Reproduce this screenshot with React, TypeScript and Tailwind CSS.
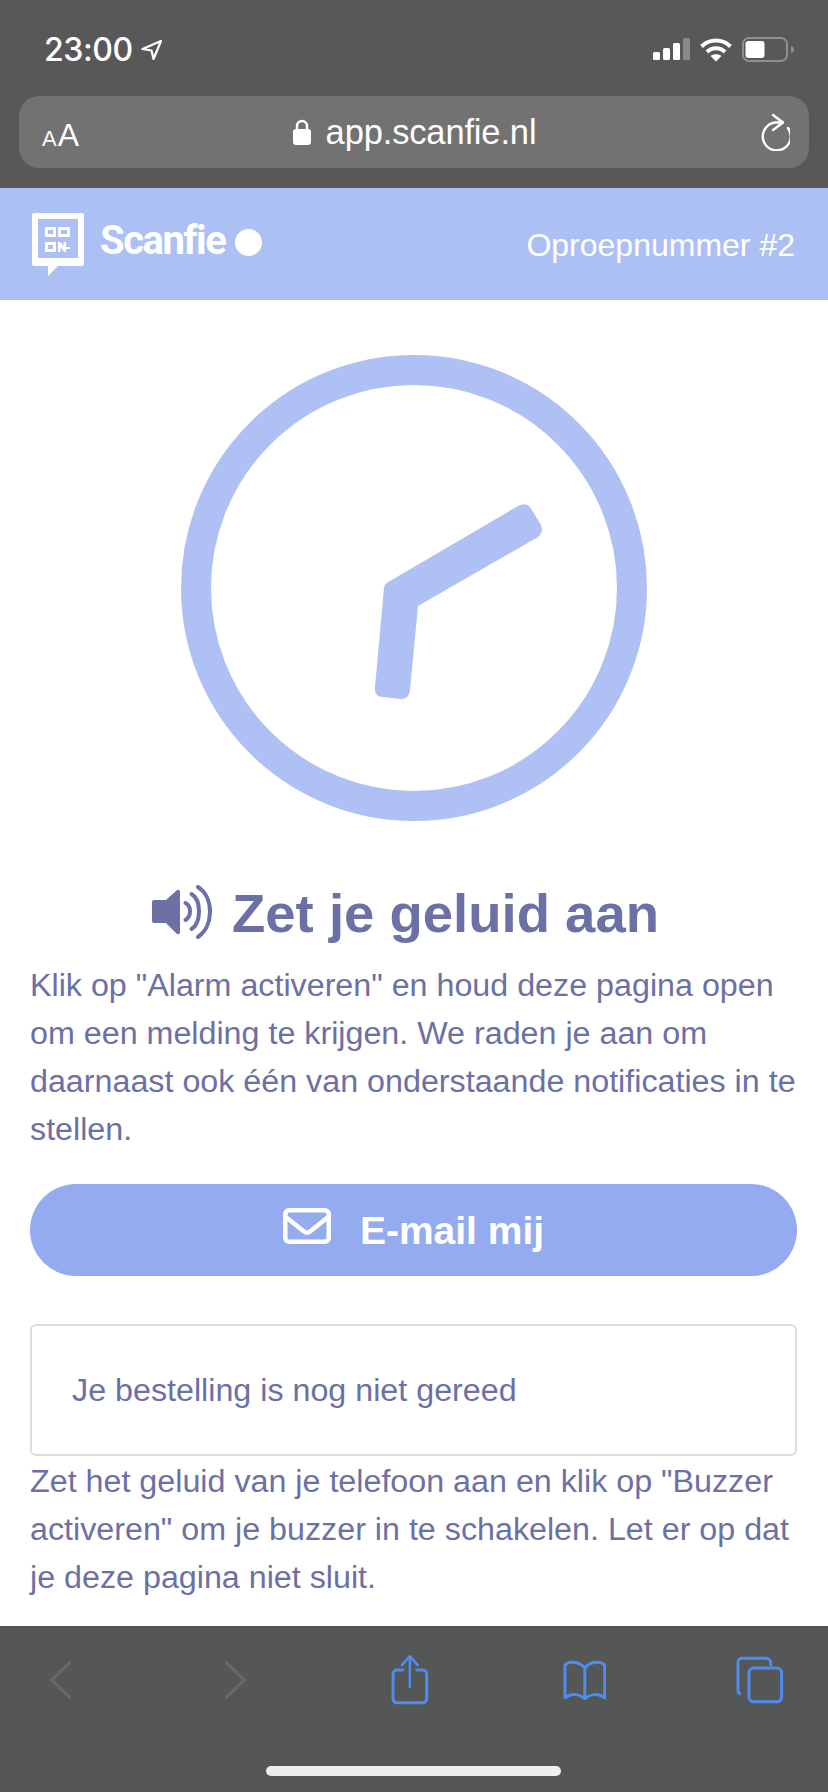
export default function App() {
  return (
    <div className="w-[828px] h-[1792px] flex flex-col overflow-hidden bg-white font-['Liberation_Sans',Arial,sans-serif]">
      {/* Status + address bar */}
      <div className="h-[188px] shrink-0 bg-[#585858] text-white flex flex-col">
        <div className="h-[96px] flex items-start justify-between pl-[44px] pr-[34px] pt-[37px]">
          <div className="flex items-center gap-[6px]">
            <span className="text-[32px] leading-[26px] tracking-[-0.4px] font-['Inter',sans-serif] font-medium w-[91px]">23:00</span>
            <svg width="22" height="22" viewBox="0 0 22 22" fill="none" stroke="white" strokeWidth="2.200" strokeLinejoin="round"><path d="M20 2 1.500 10l9 1.500 2 8.500z" /></svg>
          </div>
          <div className="flex items-start gap-[10px]">
            <svg width="37" height="22" viewBox="0 0 37 22" className="mt-[1px]"><rect x="0" y="14" width="7" height="8" rx="1.500" fill="#fff" /><rect x="10" y="10" width="7" height="12" rx="1.500" fill="#fff" /><rect x="20" y="5" width="7" height="17" rx="1.500" fill="#fff" /><rect x="30" y="0" width="7" height="22" rx="1.500" fill="#8a8a8a" /></svg>
            <svg width="32" height="24" viewBox="0 0 32 24" fill="none" stroke="#fff" strokeWidth="4" className="mt-[1px]"><path d="M1.500 8.500c8-8 21-8 29 0" /><path d="M7 14c5-5 13-5 18 0" /><path d="M16 23.500l-5.500-5.500c3-2.500 8-2.500 11 0z" fill="#fff" stroke="none" /></svg>
            <svg width="52" height="25" viewBox="0 0 52 25"><rect x="1" y="1" width="44" height="23" rx="6" fill="none" stroke="#8f8f8f" strokeWidth="2" /><rect x="3.500" y="4" width="19" height="17" rx="3" fill="#fff" /><path d="M49 9c2 .5 3 2 3 3.500s-1 3-3 3.500z" fill="#8f8f8f" /></svg>
          </div>
        </div>
        <div className="mx-[19px] h-[72px] rounded-[20px] bg-[#727272] flex items-center pl-[23px] pr-[19px] justify-between">
          <div className="flex items-baseline gap-[1px] w-[37px] mt-[6px]">
            <span className="text-[22px] leading-none">A</span>
            <span className="text-[32px] leading-none">A</span>
          </div>
          <div className="flex items-center gap-[15px] ml-[-8px]">
            <svg width="18" height="26" viewBox="0 0 18 26" fill="none"><path d="M4 11V7a5 5 0 0 1 10 0v4" stroke="#fff" strokeWidth="2.400" /><rect x="0" y="10" width="18" height="16" rx="3" fill="#fff" /></svg>
            <span className="text-[34.500px] leading-none tracking-[-0.150px]">app.scanfie.nl</span>
          </div>
          <svg width="32" height="38" viewBox="0 0 32 38" fill="none" stroke="#fff" strokeWidth="2.400" strokeLinecap="round" strokeLinejoin="round"><path d="M25 9.500H17A14 14 0 1 0 30 15" /><path d="M15 2l10 7.500-10 7.500" /></svg>
        </div>
      </div>

      {/* App header */}
      <div className="h-[112px] shrink-0 bg-[#adc0f4] flex items-center justify-between pl-[32px] pr-[33px] text-white">
        <div className="flex items-center">
          <svg width="52" height="64" viewBox="0 0 52 64" className="mt-[2px]">
            <path d="M2 0h48a2 2 0 0 1 2 2v49a2 2 0 0 1-2 2H26L16 63V53H2a2 2 0 0 1-2-2V2a2 2 0 0 1 2-2z" fill="#fff" />
            <rect x="6" y="6" width="40" height="39" fill="#adc0f4" />
            <g fill="none" stroke="#fff" strokeWidth="3">
              <rect x="14.500" y="15.500" width="8" height="7" />
              <rect x="27.500" y="15.500" width="9" height="7" />
              <rect x="14.500" y="30.500" width="8" height="7" />
            </g>
            <path d="M26 39v-10h2.500l3 4v-4h2.500v5h4v2h-4v3h-2l-3.500-5v5z" fill="#fff" />
          </svg>
          <span className="ml-[16px] text-[40px] leading-none font-bold tracking-[-1.500px] w-[135px] mb-[6px] font-['Roboto',sans-serif]">Scanfie</span>
          <span className="w-[27px] h-[27px] rounded-full bg-white mb-[4px]" />
        </div>
        <span className="text-[32px] leading-none mt-[2px]">Oproepnummer #2</span>
      </div>

      {/* Content */}
      <div className="flex-1 min-h-0 overflow-hidden px-[30px] pt-[55px] text-[#6b70a5]">
        <svg width="466" height="466" viewBox="0 0 466 466" className="block ml-[151px]">
          <circle cx="233" cy="233" r="218" fill="none" stroke="#aec0f4" strokeWidth="30" />
          <path d="M203 233 Q203 229 209 226 L337 151 Q345 147 349 152 L360 170 Q363 177 357 182 L237 251 L229 335 Q228 344 220 344 L201 342 Q193 341 194 332 Z" fill="#aec0f4" />
        </svg>

        <div className="mt-[55px] flex items-center gap-[16px] h-[76px] ml-[122px]">
          <svg width="64" height="54" viewBox="0 0 64 54" fill="none" stroke="#6b70a5" strokeLinecap="round" strokeWidth="4" className="-mt-[5px]">
            <path d="M0 17a2 2 0 0 1 2-2h12L24 6c2-2 4-1.500 4 1v40c0 2.500-2 3-4 1L14 38H2a2 2 0 0 1-2-2z" fill="#6b70a5" stroke="none" />
            <path d="M33.500 18c6 3 6 13 0 17" />
            <path d="M39.500 9c10 6 10 29 0 35" />
            <path d="M46 2c16 10 16 39 0 50" />
          </svg>
          <h1 className="text-[54.500px] leading-none font-bold text-[#6b70a5]">Zet je geluid aan</h1>
        </div>

        <p className="mt-[9px] text-[32.250px] leading-[48px]">
          Klik op "Alarm activeren" en houd deze pagina open om een melding te krijgen. We raden je aan om daarnaast ook één van onderstaande notificaties in te stellen.
        </p>

        <button className="mt-[31px] w-[767px] h-[92px] rounded-[46px] bg-[#94abef] flex items-center justify-center gap-[29px] text-white">
          <svg width="48" height="36" viewBox="0 0 48 36" fill="none" stroke="#fff" strokeWidth="4.500" strokeLinejoin="round" strokeLinecap="round" className="-mt-[9px]">
            <rect x="2.250" y="2.250" width="43.500" height="31.500" rx="4" />
            <path d="M4 10l17 13.500c2 1.500 4 1.500 6 0L44 10" />
          </svg>
          <span className="text-[39px] leading-none font-bold">E-mail mij</span>
        </button>

        <div className="mt-[48px] w-[767px] h-[132px] rounded-[6px] border-2 border-[#dddddd] flex items-center pl-[40px]">
          <span className="text-[32.250px] leading-none">Je bestelling is nog niet gereed</span>
        </div>

        <p className="mt-[1px] text-[32.250px] leading-[48px]">
          Zet het geluid van je telefoon aan en klik op "Buzzer activeren" om je buzzer in te schakelen. Let er op dat je deze pagina niet sluit.
        </p>
      </div>

      {/* Bottom toolbar */}
      <div className="h-[166px] shrink-0 bg-[#555656] relative">
        <div className="flex items-start justify-between pl-[50px] pr-[44px] pt-[29px]">
          <div className="flex gap-[154px] pt-[6px]">
            <svg width="21" height="38" viewBox="0 0 21 38" fill="none" stroke="#6b6b6b" strokeWidth="3" strokeLinecap="round" strokeLinejoin="round"><path d="M20 1.500 1.500 19 20 36.500" /></svg>
            <svg width="21" height="38" viewBox="0 0 21 38" fill="none" stroke="#6b6b6b" strokeWidth="3" strokeLinecap="round" strokeLinejoin="round"><path d="M1 1.500 19.500 19 1 36.500" /></svg>
          </div>
          <svg width="38" height="50" viewBox="0 0 38 50" fill="none" stroke="#4f8cf0" strokeWidth="3" strokeLinecap="round" strokeLinejoin="round" className="ml-[145px]"><path d="M12 15H6a4 4 0 0 0-4 4v25a4 4 0 0 0 4 4h26a4 4 0 0 0 4-4V19a4 4 0 0 0-4-4h-6" /><path d="M19 32V2" strokeWidth="2.500" /><path d="M11 10l8-9 8 9" strokeWidth="2.500" /></svg>
          <svg width="44" height="40" viewBox="0 0 44 40" fill="none" stroke="#4f8cf0" strokeWidth="3" strokeLinecap="round" strokeLinejoin="round" className="ml-[134px] mt-[5px]"><path d="M22 8C18 2 7 0 2 5v33c6-5 15-4 20 1 5-5 14-6 20-1V5C37 0 26 2 22 8v31" /></svg>
          <svg width="48" height="48" viewBox="0 0 48 48" fill="none" stroke="#4f8cf0" strokeWidth="3" strokeLinejoin="round" className="ml-[130px] mt-[1px]"><path d="M5 38a3 3 0 0 1-3-3V6a4 4 0 0 1 4-4h24a5 5 0 0 1 5 5v3" /><rect x="13" y="12" width="33" height="34" rx="5" /></svg>
        </div>
        <div className="absolute left-[266px] top-[140px] w-[295px] h-[10px] rounded-full bg-[#eeeeee]" />
      </div>
    </div>
  );
}
